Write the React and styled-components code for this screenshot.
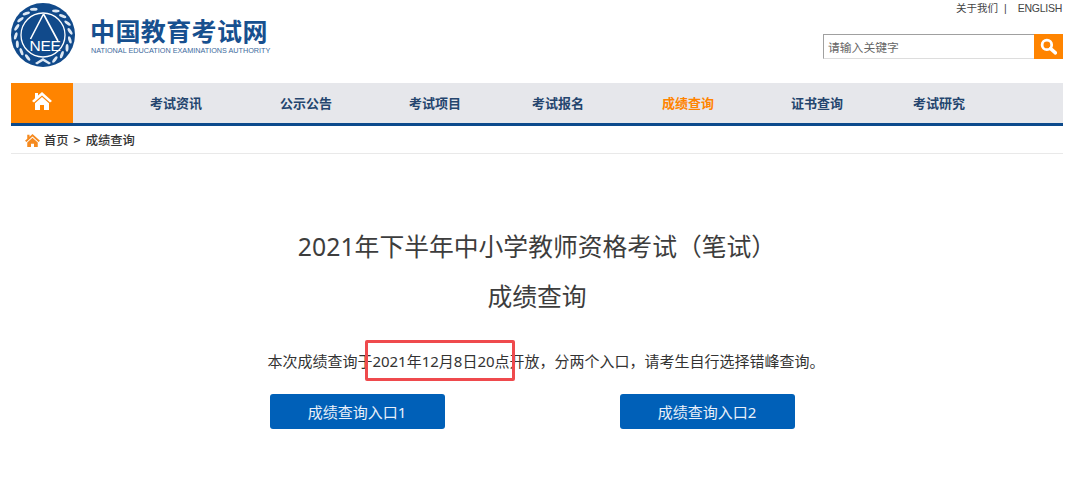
import React from "react";
import styled, { createGlobalStyle } from "styled-components";

const Global = createGlobalStyle`
  html, body { margin: 0; padding: 0; background: #fff; }
  body { font-family: "Noto Sans", "Noto Sans CJK SC", sans-serif; width: 1080px; height: 486px; overflow: hidden; }
  * { box-sizing: border-box; }
`;
const Page = styled.div`position: relative; width: 1080px; height: 486px; padding: 0 17px 0 11px; font-family: "Liberation Sans", "Noto Sans CJK SC", sans-serif;`;
const Header = styled.header`display: flex; justify-content: space-between; height: 83px;`;
const Brand = styled.div`display: flex; align-items: flex-start; padding-top: 3px;`;
const BrandText = styled.div`display: flex; flex-direction: column; margin-left: 15px; padding-top: 14px;`;
const BrandName = styled.div`font: 700 25px/30px "Liberation Sans", "Noto Sans CJK SC", sans-serif; color: #17508f; letter-spacing: 0.4px; white-space: nowrap;`;
const BrandSub = styled.div`font-size: 7.25px; line-height: 10px; margin-top: -1px; margin-left: 1px; color: #3d6a9c; white-space: nowrap;`;
const HeaderRight = styled.div`display: flex; flex-direction: column; align-items: flex-end;`;
const TopLinks = styled.div`display: flex; align-items: center; height: 15px; font-size: 10.5px; color: #444; white-space: nowrap; padding-right: 1px;`;
const Sep = styled.span`margin: 0 11px 0 6px;`;
const English = styled.span`letter-spacing: -0.25px;`;
const Search = styled.div`display: flex; width: 240px; height: 25px; margin-top: 19px;`;
const SearchField = styled.div`flex: 1; display: flex; align-items: center; padding-left: 4px; font-size: 11.8px; color: #666; border: 1px solid #ddd; border-top-color: #a0a0a0; border-left-color: #a0a0a0; border-right: 0;`;
const SearchButton = styled.div`width: 29px; background: #ff8400; display: flex; align-items: center; justify-content: center;`;
const Nav = styled.nav`display: flex; height: 43px; background: #e6e7eb; border-bottom: 3px solid #0c4a8c; align-items: center;`;
const HomeTab = styled.div`width: 62px; height: 40px; background: #ff8400; display: flex; align-items: center; justify-content: center; padding-bottom: 4px;`;
const NavItem = styled.a`margin-left: ${p => p.$gap}px; font: 700 13px/16px "Noto Sans CJK SC", sans-serif; white-space: nowrap; color: ${p => p.$active ? "#ff8400" : "#24456e"}; width: 52px; padding-bottom: 1px;`;
const Crumbs = styled.div`display: flex; align-items: center; height: 28px; padding-left: 14px; border-bottom: 1px solid #e9e9e9; font: 500 12.3px/16px "Noto Sans CJK SC", sans-serif; color: #333; white-space: pre;`;
const CrumbIcon = styled.span`display: flex; margin-right: 4px; margin-top: 2px;`;
const CrumbSep = styled.span`margin: 0 5px;`;
const Main = styled.main`display: flex; flex-direction: column; align-items: center; font-family: "Noto Sans", "Noto Sans CJK SC", sans-serif;`;
const Title = styled.h1`margin: 67px 0 0; font-weight: 400; font-size: 24.8px; line-height: 50px; color: #3d3d3d; white-space: nowrap;`;
const Subtitle = styled.h2`margin: 0; font-weight: 400; font-size: 24.8px; line-height: 50px; color: #3d3d3d;`;
const Notice = styled.p`margin: 29px 0 0 18px; font-size: 15px; line-height: 22px; color: #333; white-space: nowrap;`;
const Entries = styled.div`display: flex; gap: 175px; margin: 22px 10px 0 0;`;
const Entry = styled.a`width: 175px; height: 35px; border-radius: 3px; background: #0060b8; color: #e9f0fa; display: flex; align-items: center; justify-content: center; font-size: 15px;`;
const Highlight = styled.div`position: absolute; left: 365px; top: 340px; width: 150px; height: 41px; border: 3px solid #ef4a4d; border-radius: 2px;`;

const nav = [["考试资讯", 77], ["公示公告", 78], ["考试项目", 77], ["考试报名", 71], ["成绩查询", 78, true], ["证书查询", 77], ["考试研究", 70]];

const leafAngles = [-150, -132, -114, -96, -78, -60, -42, -24, 24, 42, 60, 78, 96, 114, 132, 150];

const Logo = () => (
  <svg width="64" height="64" viewBox="0 0 64 64">
    <circle cx="32" cy="32" r="32" fill="#114a8b" />
    <g fill="#dfe9f4">
      {leafAngles.map(a => (
        <ellipse key={a} cx="34" cy="4.8" rx="3.8" ry="1.5" transform={`rotate(${a} 32 32) rotate(${a > 0 ? -22 : 22} 34 4.8)`} />
      ))}
    </g>
    <path d="M24 60 L32 55 L40 60 L38 61.5 L32 58 L26 61.5 Z" fill="#dfe9f4" />
    <circle cx="32" cy="32" r="22" fill="#114a8b" stroke="#fff" strokeWidth="1.3" />
    <path d="M32.5 11 L19.5 36 M32.5 11 L47 38" stroke="#fff" strokeWidth="1.6" fill="none" />
    <text x="34" y="47.5" textAnchor="middle" fontFamily="Liberation Sans" fontSize="15.5" letterSpacing="-0.3" fill="#fff">NEE</text>
  </svg>
);

const HomeIcon = ({ color = "#fff", size = 20 }) => (
  <svg width={size} height={size * 0.9} viewBox="0 0 20 18">
    <path d="M10 0 L20 9 L18 10.6 L10 3.4 L2 10.6 L0 9 L3 6.3 V1 H6 V3.6 Z" fill={color} />
    <path d="M10 5 L17 11.2 V18 H12 V13 H8 V18 H3 V11.2 Z" fill={color} />
  </svg>
);

export default function App() {
  return (
    <Page>
      <Global />
      <Header>
        <Brand>
          <Logo />
          <BrandText>
            <BrandName>中国教育考试网</BrandName>
            <BrandSub>NATIONAL EDUCATION EXAMINATIONS AUTHORITY</BrandSub>
          </BrandText>
        </Brand>
        <HeaderRight>
          <TopLinks>关于我们<Sep>|</Sep><English>ENGLISH</English></TopLinks>
          <Search>
            <SearchField>请输入关键字</SearchField>
            <SearchButton>
              <svg width="17" height="17" viewBox="0 0 16 16" fill="none" stroke="#fff">
                <circle cx="6.5" cy="6.5" r="4.5" strokeWidth="2.6" />
                <path d="M10 10 L14.5 14" strokeWidth="3.2" strokeLinecap="round" />
              </svg>
            </SearchButton>
          </Search>
        </HeaderRight>
      </Header>
      <Nav>
        <HomeTab><HomeIcon /></HomeTab>
        {nav.map(([label, gap, active]) => (
          <NavItem key={label} $gap={gap} $active={active}>{label}</NavItem>
        ))}
      </Nav>
      <Crumbs>
        <CrumbIcon><HomeIcon color="#f58a1f" size={15} /></CrumbIcon>
        首页<CrumbSep>&gt;</CrumbSep>成绩查询
      </Crumbs>
      <Main>
        <Title>2021年下半年中小学教师资格考试（笔试）</Title>
        <Subtitle>成绩查询</Subtitle>
        <Notice>本次成绩查询于2021年12月8日20点开放，分两个入口，请考生自行选择错峰查询。</Notice>
        <Entries>
          <Entry>成绩查询入口1</Entry>
          <Entry>成绩查询入口2</Entry>
        </Entries>
      </Main>
      <Highlight />
    </Page>
  );
}
